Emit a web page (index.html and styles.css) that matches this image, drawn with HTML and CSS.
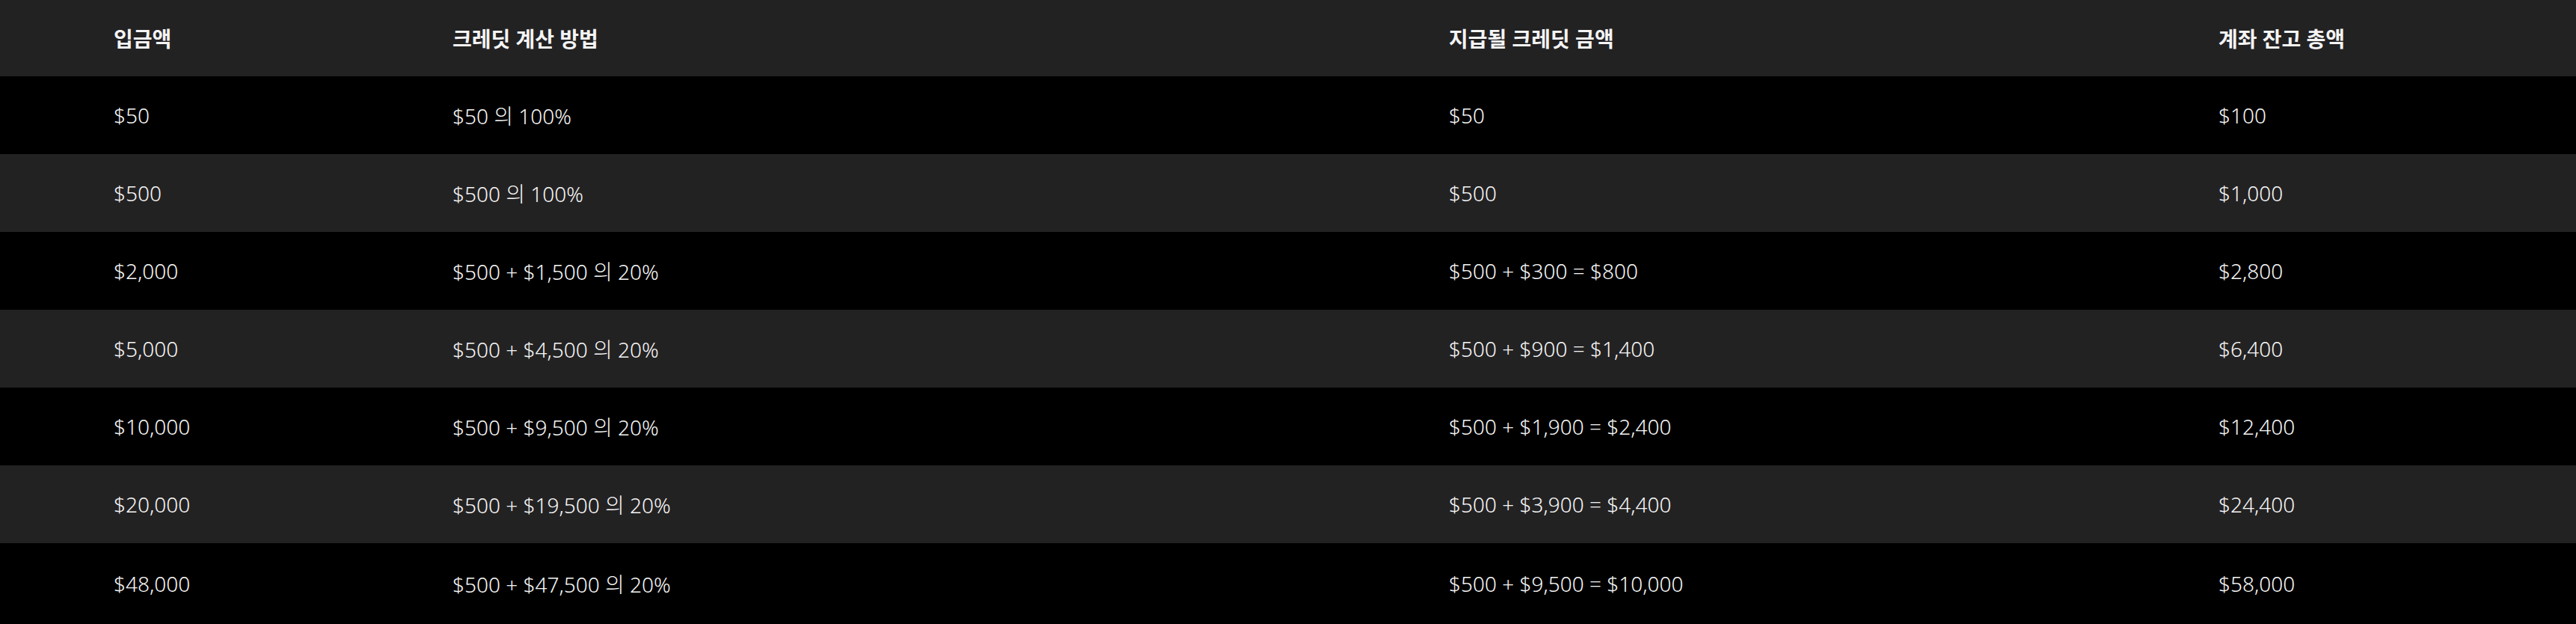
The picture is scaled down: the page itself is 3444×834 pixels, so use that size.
FILE: index.html
```html
<!DOCTYPE html>
<html lang="ko">
<head>
<meta charset="utf-8">
<title>크레딧 계산</title>
<link rel="stylesheet" href="styles.css">
</head>
<body>
<div class="table">
  <div class="row head">
    <div class="cell">입금액</div>
    <div class="cell">크레딧 계산 방법</div>
    <div class="cell">지급될 크레딧 금액</div>
    <div class="cell">계좌 잔고 총액</div>
  </div>
  <div class="row">
    <div class="cell">$50</div>
    <div class="cell">$50 의 100%</div>
    <div class="cell">$50</div>
    <div class="cell">$100</div>
  </div>
  <div class="row alt">
    <div class="cell">$500</div>
    <div class="cell">$500 의 100%</div>
    <div class="cell">$500</div>
    <div class="cell">$1,000</div>
  </div>
  <div class="row">
    <div class="cell">$2,000</div>
    <div class="cell">$500 + $1,500 의 20%</div>
    <div class="cell">$500 + $300 = $800</div>
    <div class="cell">$2,800</div>
  </div>
  <div class="row alt">
    <div class="cell">$5,000</div>
    <div class="cell">$500 + $4,500 의 20%</div>
    <div class="cell">$500 + $900 = $1,400</div>
    <div class="cell">$6,400</div>
  </div>
  <div class="row">
    <div class="cell">$10,000</div>
    <div class="cell">$500 + $9,500 의 20%</div>
    <div class="cell">$500 + $1,900 = $2,400</div>
    <div class="cell">$12,400</div>
  </div>
  <div class="row alt">
    <div class="cell">$20,000</div>
    <div class="cell">$500 + $19,500 의 20%</div>
    <div class="cell">$500 + $3,900 = $4,400</div>
    <div class="cell">$24,400</div>
  </div>
  <div class="row">
    <div class="cell">$48,000</div>
    <div class="cell">$500 + $47,500 의 20%</div>
    <div class="cell">$500 + $9,500 = $10,000</div>
    <div class="cell">$58,000</div>
  </div>
</div>
</body>
</html>
```
FILE: styles.css
```css
html, body {
  margin: 0;
  padding: 0;
  background: #000;
}
body {
  font-family: "Noto Sans", "Noto Sans CJK KR", sans-serif;
  color: #f6f6f6;
}
.table {
  display: flex;
  flex-direction: column;
}
.row {
  display: grid;
  grid-template-columns: 453px 1332px 1029px 1fr;
  padding-left: 152px;
  height: 104px;
  align-items: center;
  font-size: 28px;
  font-weight: 300;
  background: #000;
}
.row.alt {
  background: #232223;
}
.row.head {
  height: 102px;
  background: #232223;
  font-weight: 700;
  font-size: 28px;
  color: #f4f4f4;
}
.row:last-child {
  height: 108px;
}
.cell {
  white-space: nowrap;
}
```
